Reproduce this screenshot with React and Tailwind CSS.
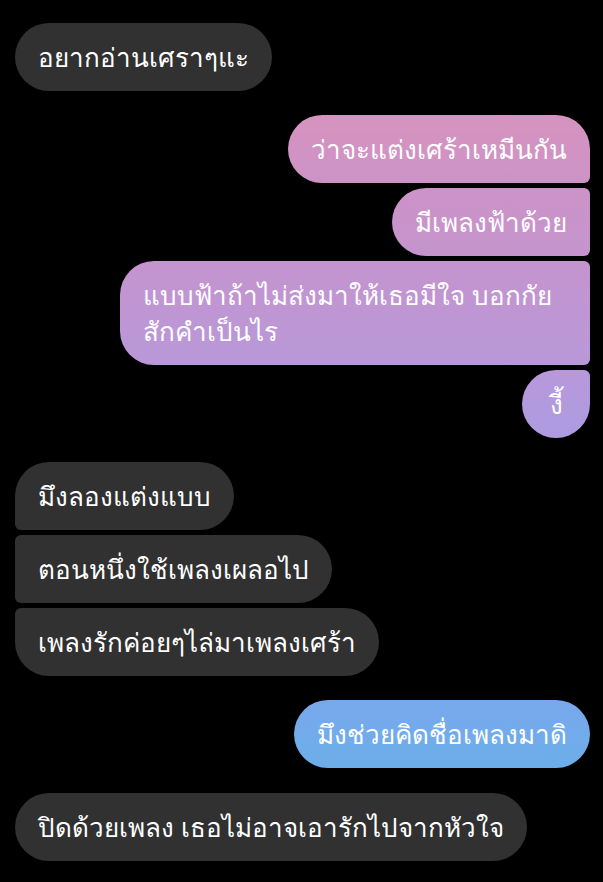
import React from 'react';

const msgs = [
  { side: 'left', text: 'อยากอ่านเศราๆแะ', round: 'rounded-[34px]', mt: 'mt-[22px]' },
  { side: 'right', text: 'ว่าจะแต่งเศร้าเหมีนกัน', round: 'rounded-[34px] rounded-br-[6px]', mt: 'mt-[24px]', bg: 'bg-gradient-to-b from-[#d693bf] to-[#cd93c6]' },
  { side: 'right', text: 'มีเพลงฟ้าด้วย', round: 'rounded-l-[34px] rounded-r-[6px]', mt: 'mt-[5px]', bg: 'bg-gradient-to-b from-[#cc93c7] to-[#c594cd]' },
  { side: 'right', lines: ['แบบฟ้าถ้าไม่ส่งมาให้เธอมีใจ บอกกัย', 'สักคำเป็นไร'], round: 'rounded-l-[34px] rounded-r-[6px]', mt: 'mt-[5px]', bg: 'bg-gradient-to-b from-[#c494ce] to-[#b998d9]', w: 'w-[470px] px-[23px]' },
  { side: 'right', text: 'งี้', round: 'rounded-[34px] rounded-tr-[6px]', mt: 'mt-[5px]', bg: 'bg-gradient-to-b from-[#b898da] to-[#ad9be1]', w: 'w-[68px] text-center' },
  { side: 'left', text: 'มึงลองแต่งแบบ', round: 'rounded-[34px] rounded-bl-[6px]', mt: 'mt-[24px]' },
  { side: 'left', text: 'ตอนหนึ่งใช้เพลงเผลอไป', round: 'rounded-r-[34px] rounded-l-[6px]', mt: 'mt-[5px]' },
  { side: 'left', text: 'เพลงรักค่อยๆไล่มาเพลงเศร้า', round: 'rounded-[34px] rounded-tl-[6px]', mt: 'mt-[5px]' },
  { side: 'right', text: 'มึงช่วยคิดชื่อเพลงมาดิ', round: 'rounded-[34px]', mt: 'mt-[24px]', bg: 'bg-gradient-to-b from-[#78a8ec] to-[#6caeea]' },
  { side: 'left', text: 'ปิดด้วยเพลง เธอไม่อาจเอารักไปจากหัวใจ', round: 'rounded-[34px]', mt: 'mt-[25px]' },
];

function Bubble({ m }) {
  const bg = m.bg || 'bg-[#313131]';
  return (
    <div className={`flex ${m.side === 'right' ? 'justify-end' : 'justify-start'} ${m.mt}`}>
      <div className={`${bg} ${m.round} ${m.w || 'px-[23px]'} py-[16px] text-white text-[26px] leading-[36px]`}>
        {m.lines ? m.lines.map((l, i) => <div key={i}>{l}</div>) : m.text}
      </div>
    </div>
  );
}

export default function App() {
  return (
    <div className="min-h-screen bg-black pl-[15px] pr-[13px] pb-4" style={{ fontFamily: '"Noto Sans", sans-serif' }}>
      <div className="pt-px">
        {msgs.map((m, i) => (
          <Bubble key={i} m={m} />
        ))}
      </div>
    </div>
  );
}
